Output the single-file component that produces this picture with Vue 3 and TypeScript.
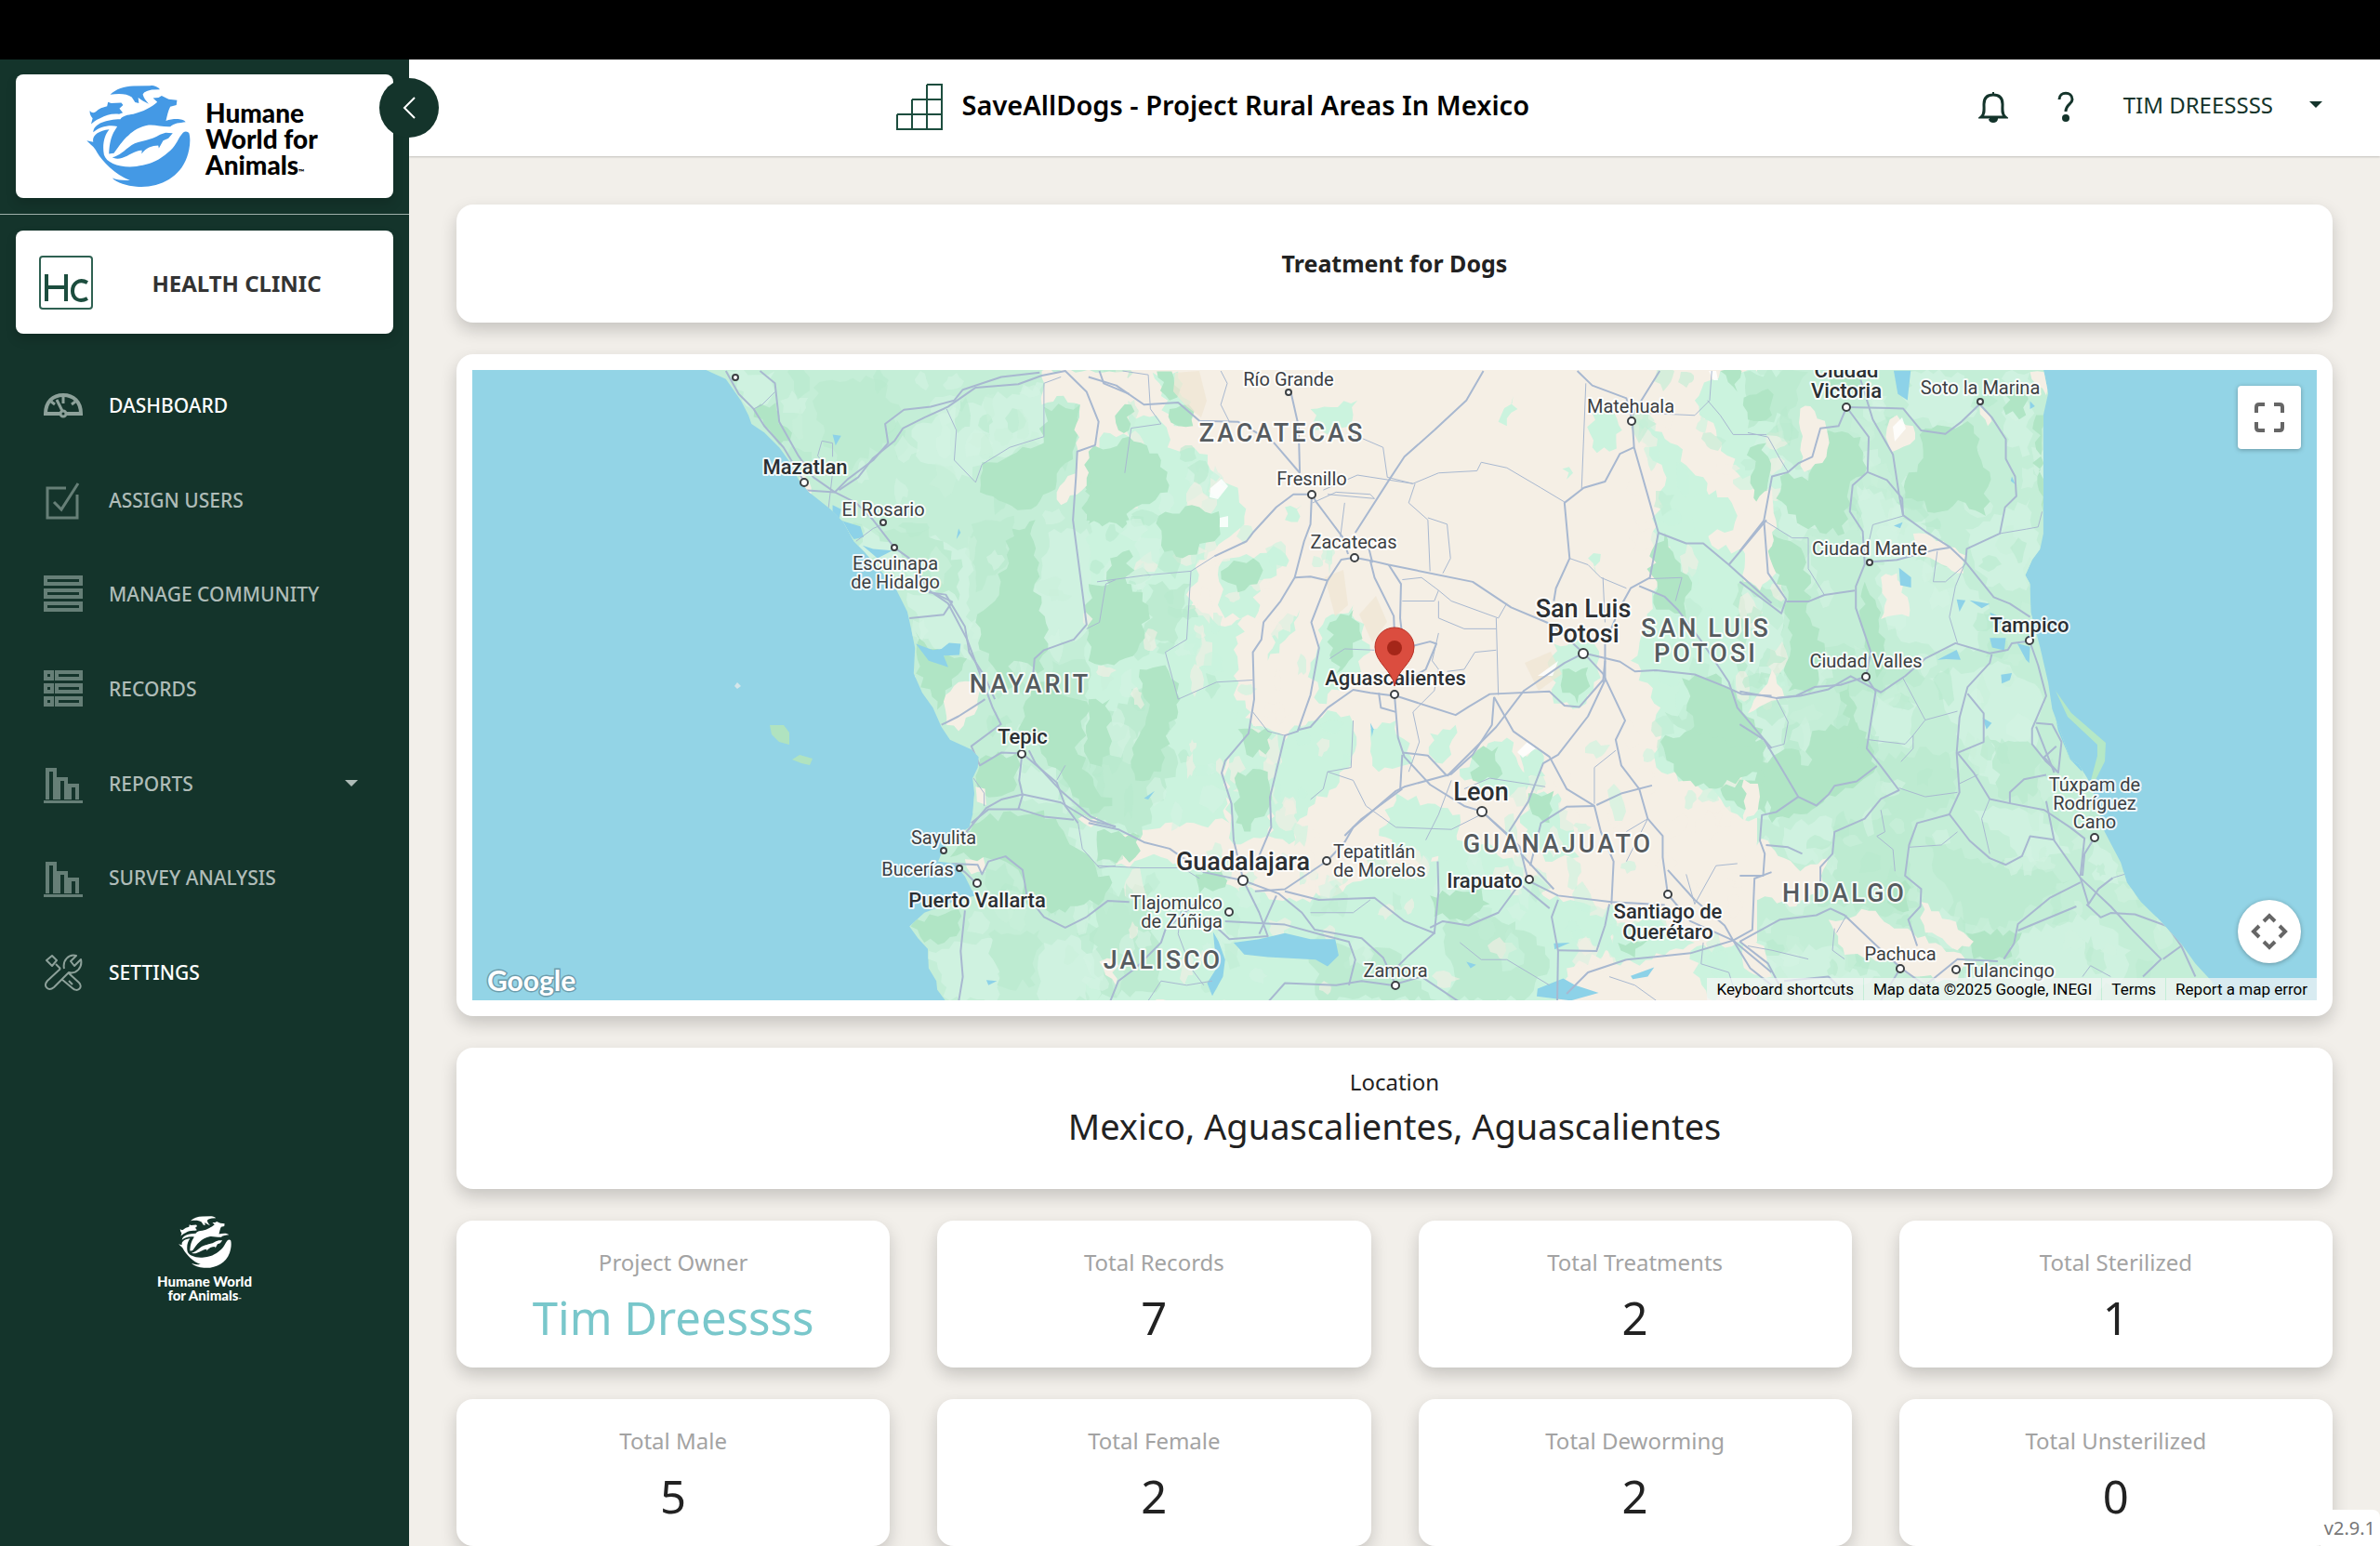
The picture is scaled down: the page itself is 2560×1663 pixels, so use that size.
<script setup lang="ts">
interface NavItem { label: string; icon: string; bright?: boolean; caret?: boolean }
interface Stat { label: string; value: string; link?: boolean }
interface Label { t: string[]; x: number; y: number; k: 's' | 'm' | 'l' | 'r'; a?: string; lh?: number }
interface Town { x: number; y: number; r: number }
interface Sheet { m: string; sand: string[]; light: string[]; mid: string[]; dark: string[]; lakes: string[]; roads: string[]; minor: string[] }

const nav: NavItem[] = [
  { label: 'DASHBOARD', icon: 'gauge', bright: true },
  { label: 'ASSIGN USERS', icon: 'check' },
  { label: 'MANAGE COMMUNITY', icon: 'rows' },
  { label: 'RECORDS', icon: 'list' },
  { label: 'REPORTS', icon: 'bars', caret: true },
  { label: 'SURVEY ANALYSIS', icon: 'bars' },
  { label: 'SETTINGS', icon: 'tools', bright: true },
]

const stats: Stat[] = [
  { label: 'Project Owner', value: 'Tim Dreessss', link: true },
  { label: 'Total Records', value: '7' },
  { label: 'Total Treatments', value: '2' },
  { label: 'Total Sterilized', value: '1' },
  { label: 'Total Male', value: '5' },
  { label: 'Total Female', value: '2' },
  { label: 'Total Deworming', value: '2' },
  { label: 'Total Unsterilized', value: '0' },
]

/* small seeded generator, so that the terrain is the same on every load */
let seed = 7
function rnd(): number {
  seed = (seed * 16807) % 2147483647
  return seed / 2147483647
}

/* breaks a coarse outline into an irregular one */
function rough(src: string, amp = 11): string {
  const p = src.split(' ').map(s => s.split(',').map(Number))
  const out: string[] = []
  p.forEach((a, i) => {
    const b = p[(i + 1) % p.length]
    const dx = b[0] - a[0]
    const dy = b[1] - a[1]
    const len = Math.hypot(dx, dy) || 1
    const n = Math.max(1, Math.round(len / 16))
    for (let k = 0; k < n; k++) {
      const j = k ? (rnd() - 0.5) * 2 * amp : 0
      out.push(`${Math.round(a[0] + (dx * k) / n - (dy / len) * j)},${Math.round(a[1] + (dy * k) / n + (dx / len) * j)}`)
    }
  })
  return out.join(' ')
}

function blob(cx: number, cy: number, rx: number, ry: number): string {
  const o: string[] = []
  for (let i = 0; i < 11; i++) {
    const a = (i / 11) * Math.PI * 2
    const q = 0.5 + rnd() * 0.7
    o.push(`${Math.round(cx + Math.cos(a) * rx * q)},${Math.round(cy + Math.sin(a) * ry * q)}`)
  }
  return o.join(' ')
}

const coastWest = '600,55 655,80 690,130 708,165 715,185 745,205 780,240 805,275 825,315 850,345 900,385 930,415 955,460 980,485 1010,520 1055,575 1080,625 1090,670 1098,710 1095,770 1115,815 1140,850 1160,895 1180,925 1230,948 1247,965 1245,990 1233,1015 1237,1050 1233,1100 1225,1130 1190,1150 1165,1180 1152,1210 1190,1215 1215,1245 1230,1275 1240,1290 1200,1300 1120,1330 1085,1362 1105,1390 1128,1415 1130,1460 1148,1490 1150,1510 1172,1540 1600,1540 1600,55'
const coastEast = '0,50 732,50 745,110 733,160 733,430 725,465 705,490 688,525 700,545 702,610 725,690 745,770 755,830 775,880 800,945 820,955 850,1000 870,1060 885,1110 925,1180 940,1225 975,1270 1020,1310 1075,1365 1110,1410 1150,1450 1175,1500 0,1500'

const sheets: Sheet[] = [
  {
    m: 'translate(480 370) scale(.4592)',
    sand: ['1395,61 1600,61 1600,215 1540,205 1530,250 1500,330 1440,375 1430,345 1478,285 1475,230 1485,140 1430,120 1395,140', '1165,835 1200,790 1250,790 1245,850 1200,905 1172,890', '1240,1035 1262,1040 1265,1078 1243,1070', '1215,1205 1258,1200 1262,1235 1230,1240', '820,290 850,320 855,350 825,330', '1555,330 1568,330 1568,345', '1480,1110 1525,1105 1510,1130', '1530,1445 1568,1440 1568,1500'],
    light: ['660,61 770,61 770,110 720,150', '1160,160 1400,90 1405,220 1290,260 1200,320 1100,260 1090,200', '850,420 930,415 1000,440 1100,440 1230,480 1220,700 1180,690 1140,580', '1410,440 1500,430 1550,560 1500,670 1400,720 1380,560', '1080,580 1200,600 1230,740 1110,690', '1340,1000 1450,980 1470,1080 1340,1060', '1460,1130 1568,1120 1568,1220 1500,1220', '1130,1420 1300,1380 1290,1536 1180,1536', '1400,1400 1560,1360 1500,1536 1390,1536', '1500,860 1568,840 1568,1000 1520,980'],
    mid: ['860,100 1000,80 1060,140 1040,230 930,290 880,220', '1000,430 1130,430 1210,520 1200,600 1090,530', '1230,420 1330,400 1310,520 1240,580', '1420,740 1530,740 1540,830 1440,830', '1270,1380 1390,1370 1380,1500 1290,1500'],
    dark: ['722,150 772,135 805,225 780,235 745,190', '1255,275 1400,230 1400,145 1485,140 1473,235 1430,320 1370,385 1310,370 1250,345', '1325,430 1380,410 1378,560 1410,700 1385,770 1330,740 1310,830 1270,740 1240,650 1285,600', '1500,290 1600,265 1600,410 1500,412', '1555,500 1600,480 1600,690 1545,680', '1098,670 1160,730 1220,735 1185,800 1150,855 1100,770', '1385,790 1500,835 1480,960 1560,1080 1510,1100 1440,1000 1340,900', '1250,970 1340,950 1330,1045 1270,1060 1240,1010', '1260,1110 1400,1090 1460,1170 1560,1260 1540,1300 1450,1330 1360,1310 1340,1230 1260,1200 1180,1200 1200,1150', '1088,1362 1200,1322 1195,1385 1120,1400'],
    lakes: ['905,375 925,385 920,410 905,395', '920,410 970,425 978,450 955,455', '1100,700 1140,715 1160,712 1178,698 1205,700 1202,726 1165,728 1176,755 1130,740', '975,470 1000,478 1045,482 1010,500', '905,210 925,213 912,236', '1265,1488 1290,1490 1270,1500', '1200,430 1205,440 1195,455'],
    roads: ['655,61 685,115 720,150 745,190 790,240 838,320', '735,61 770,90 780,180 825,260 860,310 910,345 960,370 1000,410 1050,475 1085,500 1130,575 1175,605 1220,690 1250,770 1280,850 1300,890', '838,340 910,345', '910,345 940,315 1000,270 1035,230 1028,185 1072,152 1135,145 1190,130 1210,105 1300,75 1390,65', '920,340 965,310 1000,265 1050,225 1070,195 1120,170 1175,145 1240,100 1340,92 1395,72 1450,61 1500,110 1528,180 1520,235 1478,250 1475,310 1468,410 1485,540 1500,655 1470,690 1400,715 1378,735 1375,770', '1085,640 1165,632 1185,602 1140,580', '1130,580 1170,585 1215,660 1225,720 1260,775 1285,830', '1160,890 1200,870 1255,835 1262,830', '1300,888 1230,940 1250,985 1300,955 1349,957 1365,970 1430,1025 1450,1080 1480,1120', '1365,950 1380,980 1440,1045 1510,1105 1568,1130', '1349,957 1342,1020 1350,1055 1340,1088', '1215,1145 1265,1085 1300,1065 1350,1053 1440,1072 1510,1115 1568,1128', '1230,1120 1270,1088 1345,1088 1400,1105 1470,1112', '1242,1262 1215,1235 1185,1215 1245,1218 1255,1240 1270,1210 1310,1198 1350,1230 1360,1290 1400,1340 1450,1365 1500,1340 1550,1302 1600,1305', '1215,1325 1205,1420 1210,1480 1200,1540', '1530,61 1540,90 1600,115'],
    minor: ['1172,150 1195,200 1190,270 1240,322 1255,280 1320,240 1400,215 1400,90 1440,75', '895,385 905,300 870,260 880,225 905,230 905,262', '960,460 1000,430 1024,420', '1500,665 1530,650 1545,560 1568,550', '1480,1120 1490,1180 1530,1225 1568,1220', '720,150 740,140 770,110', '1235,1015 1260,1050 1260,1080', '1430,1020 1450,985'],
  },
  {
    m: 'translate(1180 370) scale(.4592)',
    sand: [],
    light: [
      '-20,150 60,130 80,160 150,180 165,240 240,255 330,335 345,420 230,520 215,620 300,660 340,640 330,700 320,820 360,860 350,920 295,1000 310,1120 160,1120 90,1150 -20,1110',
      '285,520 350,490 430,480 450,505 380,560 370,640 300,640 290,590', '130,65 190,62 220,180 180,190 150,120', '500,150 610,130 600,200 510,200', '450,905 560,860 600,885 595,985 510,1075 450,1170 400,1150 430,960', '330,860 440,920 410,1060 400,1150 320,1170 300,1020',
      '-20,1230 150,1200 270,1240 420,1300 560,1290 640,1230 780,1210 870,1150 980,1220 1060,1300 1220,1320 1210,1420 1100,1460 1080,1545 -20,1545',
      '700,1050 850,1100 830,1200 760,1220 660,1150', '940,180 975,120 985,150 960,190', '1270,180 1330,220 1420,310 1455,400 1440,470 1568,490 1600,560 1600,1130 1500,1100 1450,1050 1310,990 1320,850 1250,740 1300,600 1330,540 1300,440 1330,330',
      '1160,160 1200,150 1230,200 1200,250 1160,240', '1460,61 1600,61 1600,330 1500,300 1450,200 1400,130', '1070,700 1160,690 1180,780 1130,850 1070,840 1060,760', '780,910 840,890 830,960 780,990', '990,960 1040,950 1050,1010 1000,1020', '880,960 960,920 1010,1010 1000,1080 900,1040 850,1010', '1000,1060 1080,1050 1130,1200 1050,1210 1000,1150', '1200,1370 1300,1330 1400,1400 1300,1440 1210,1450', '1390,1420 1568,1400 1568,1500 1430,1530', '535,640 600,610 640,720 580,800 520,840 500,760', '425,650 475,620 450,680 400,740', '1150,500 1180,490 1170,540', '440,380 480,375 470,415 440,410', '1090,290 1115,300 1100,315', '1380,360 1450,340 1500,400 1470,440 1400,440', '640,900 700,880 740,980 660,1000',
    ],
    mid: ['0,880 120,800 190,980 100,1160 -10,1100', '120,560 220,560 180,700 120,700', '-10,1300 120,1260 150,1500 0,1536', '500,1400 700,1420 800,1536 520,1536', '820,1350 980,1350 1060,1440 1000,1536 830,1536', '1500,560 1600,560 1600,800 1510,780', '1330,860 1420,850 1568,930 1568,1000 1440,970'],
    dark: [
      '-20,250 75,215 150,270 165,345 90,380 60,430 -20,420', '55,150 80,140 75,200 50,200', '145,400 240,380 285,390 275,460 200,500 150,470', '-20,560 80,560 120,610 100,700 40,750 -20,740', '100,760 160,750 195,830 170,900 150,1000 90,1020 90,930 120,860', '-20,830 30,830 30,960 -20,1000', '290,530 320,505 380,510 375,560 330,580', '545,650 600,620 615,670 600,730 560,770', '330,900 410,910 395,960 350,960', '330,1000 400,1000 410,1060 360,1140 325,1120', '780,1290 900,1270 920,1310 860,1350 790,1340', '890,950 940,940 950,1005 880,1020', '1090,760 1150,755 1155,800 1125,840 1090,815', '1320,930 1450,880 1568,940 1568,1000 1450,1040 1360,1010', '1300,480 1330,440 1385,540 1380,640 1310,620 1300,540', '1370,780 1450,770 1560,900 1540,960 1400,900', '1460,1040 1568,1000 1568,1100 1500,1080', '230,1240 290,1230 300,1270 240,1285', '0,1140 100,1150 90,1200 0,1210', '1460,61 1510,61 1500,110', '170,150 215,140 225,190 190,190', '1010,1050 1070,1045 1060,1120 1020,1100', '1220,1400 1290,1395 1260,1435', '1530,240 1568,230 1568,420 1540,340', '140,62 175,62 195,105 170,130',
    ],
    lakes: ['320,1400 380,1392 440,1378 500,1392 558,1392 566,1430 540,1456 512,1440 400,1434 345,1428', '272,1375 285,1398 300,1440 295,1480 270,1525 258,1495 280,1460', '1032,1508 1092,1484 1120,1500 1175,1518 1110,1536 1030,1526', '1070,1402 1108,1400 1072,1416', '1250,1478 1305,1458 1290,1480 1255,1486', '865,1445 888,1452 875,1460', '640,885 648,900 644,918', '110,1062 135,1045 120,1065'],
    roads: [
      '905,61 865,130 790,200 720,262 685,315 605,440', '-20,75 45,95 110,140 190,135 240,178 330,180 415,230 475,300', '455,115 472,190 475,300', '503,350 515,370 545,410 575,450 588,490', '503,350 460,350 420,380 365,440 350,460 275,495', '503,350 500,420 485,460 463,545 430,600 390,650 385,690 365,720 368,830 355,910 300,975 292,1003 315,1075 320,1160 343,1255', '463,545 500,543 540,552', '603,498 572,503 540,552 502,650 520,710 500,820 470,905 440,915 405,1060 408,1130 370,1220', '603,498 640,505 683,515 880,555 970,615 1065,655 1140,722', '640,505 650,545 695,635 697,680', '635,470 645,510', '683,515 712,560 710,640 716,690', '1254,180 1258,240 1315,440 1295,545 1250,570 1225,615 1190,700', '1258,240 1225,255 1190,320 1140,335 1095,370 1107,500 1075,570 1070,600', '1125,61 1160,95 1240,125 1254,180', '1318,61 1275,130 1254,165', '1315,440 1380,465 1420,465 1480,515 1580,605', '1480,515 1568,410', '1270,565 1330,590 1360,620 1420,700 1480,790 1500,850 1580,945',
      '1140,722 1185,770 1237,880 1215,925 1228,985 1270,1040 1290,1110 1325,1150 1325,1200 1337,1287', '1140,722 1095,745 1000,810 935,895 880,950 820,1010', '700,822 840,867 870,848 920,818 1060,812 1095,845 1130,848 1185,785', '930,825 975,905 1060,965 1100,1040 1165,1080 1180,1140 1210,1210 1205,1310', '930,825 925,890 880,960 830,1005 720,1035 700,1045 600,1130 580,1165 540,1208 440,1275 370,1280', '697,822 705,920 720,965 780,1030 860,1080 902,1093 990,1175 1010,1255 1080,1290 1205,1305 1330,1312', '902,1093 960,1145 1000,1200 1070,1275', '697,822 640,815 600,808 540,850 500,895 470,902', '715,955 775,962 820,1010', '715,960 710,1045', '715,1040 620,1110 580,1150', '-20,1120 50,1135 110,1165 170,1180 250,1235 343,1255', '343,1255 425,1285 480,1330 510,1370 620,1390 670,1435 700,1500', '343,1255 380,1330 400,1385 310,1392 270,1355', '440,1280 520,1300 650,1295 720,1350 790,1378 730,1430 700,1460', '300,1350 440,1358 520,1380 590,1398 605,1440 590,1500', '780,1365 810,1350 870,1360 940,1330 990,1262', '1080,1300 1065,1340 1080,1420 1078,1540', '1080,1418 1170,1420 1190,1360 1200,1310', '1337,1287 1390,1350 1490,1395 1580,1470', '1190,700 1190,785 1150,870 1080,960 1045,980 1010,1070 965,1140', '1170,1078 1230,1050 1300,1032', '1015,1220 1040,1120 1100,1082 1165,1080', '1140,722 1225,742 1260,765 1310,762 1400,772 1470,800 1510,818 1580,822', '1490,1395 1535,1370 1540,1250 1580,1235', '1337,1230 1400,1300 1470,1360 1490,1395', '30,1540 50,1490 90,1460 150,1400 160,1370 240,1300', '400,1540 440,1495 560,1500 620,1490 690,1500 760,1480 850,1540', '1100,1520 1150,1470 1240,1440 1390,1425 1490,1395', '740,705 780,695 795,700 770,760 720,790', '1190,740 1185,790', '1490,1395 1530,1460 1580,1500', '660,815 665,850 700,860', '420,1290 380,1380', '798,1210 800,1280 790,1380', '990,1262 1060,1320',
    ],
    minor: ['60,61 120,70 125,150 150,185 80,195 65,300', '290,61 305,90 290,140 310,180', '600,210 670,240 680,310 740,325', '505,370 560,345 640,350 650,360 540,350', '570,450 580,370', '530,340 610,305 740,325 800,300 890,295 900,275 960,288 1040,335 1095,368', '745,325 730,370 775,410 780,530', '775,405 820,420 828,500 810,535', '1145,90 1135,340', '1440,61 1435,130 1400,165 1290,160', '1430,130 1460,165 1490,210 1568,210', '0,555 110,540 220,530 275,495', '220,530 215,610 210,690 160,720 190,830 280,790 365,785', '365,860 400,905 440,915', '715,550 760,545 800,575 830,600 940,640 960,605', '715,600 790,600 800,575', '800,600 800,640 860,665 935,665', '935,640 940,820', '800,675 785,740 800,760 790,810 740,860 755,930 730,1000', '600,880 595,990 540,1000 530,1040 500,1065', '540,1000 600,1020 630,1080 700,1130 830,1135 900,1100', '545,735 580,712 650,715', '1107,500 1150,515 1180,545 1240,570', '1185,545 1190,650', '935,715 885,720 860,760 820,765', '830,1020 800,1100 770,1160', '860,1040 920,1015 1050,1035', '1165,1075 1165,990 1215,950', '0,1220 100,1225 200,1225 240,1250', '200,1300 190,1380 220,1460 250,1500', '640,1300 600,1330 500,1330', '1380,1240 1400,1310 1450,1220 1500,1215', '1420,1400 1415,1450 1480,1470 1500,1536', '1290,548 1370,545 1355,600', '1240,1140 1290,1110 1240,1210', '120,1536 150,1490 210,1500 270,1490', '850,1400 900,1440 960,1440 1060,1500', '1200,1480 1260,1500 1310,1536'],
  },
  {
    m: 'translate(1880 370) scale(.4337 .4719)',
    sand: ['130,145 155,140 195,190 195,255 140,290 130,240', '345,190 370,160 410,185 415,215 355,245', '-10,380 60,330 70,400 50,470 70,520 30,560 -10,540', '410,430 440,430 540,480 535,520 480,500 410,460', '330,530 370,520 400,590 400,620 330,625 345,580', '-10,1140 50,1130 90,1170 130,1200 200,1170 180,1240 120,1280 60,1260 -10,1270', '200,1310 300,1290 380,1330 480,1370 540,1400 520,1450 420,1440 350,1400 240,1390', '430,1270 500,1310 560,1360 520,1380 440,1340', '700,62 735,62 740,115 715,90', '-10,1340 40,1370 60,1440 -10,1420', '-10,990 25,1000 25,1060 -10,1090', '575,140 600,160 595,185', '0,840 60,740 90,800'],
    light: ['70,250 150,290 170,420 100,450 50,330', '400,62 520,62 570,150 500,200 390,150', '270,320 390,360 480,440 370,520 290,480', '320,500 520,500 600,600 560,700 400,680 340,620', '540,420 700,350 725,460 690,560 590,550', '450,760 620,720 730,800 700,960 600,1000 530,900', '0,840 100,820 100,900 60,950 0,900', '320,800 420,820 400,920 310,900', '560,1060 720,1060 800,1160 700,1180', '90,1100 210,1080 190,1180 100,1170', '680,1340 850,1300 950,1380 900,1494 640,1494', '640,62 700,62 700,250 640,230', '850,1130 900,1160 920,1230 860,1220', '-10,550 80,600 90,720 0,780', '40,1380 200,1370 330,1440 200,1494 50,1494'],
    mid: ['190,690 330,700 440,760 330,800 190,780', '320,940 520,920 520,1040 420,1080 330,1060', '210,1100 400,1060 400,1200 430,1280 330,1300 210,1270', '440,1120 600,1180 800,1220 640,1330 520,1320', '600,900 720,920 730,1040 620,1030', '-10,62 150,62 120,140 0,190'],
    dark: ['440,190 560,185 600,290 590,390 540,360 480,380 390,350 390,310 420,290', '160,280 200,195 280,210 295,280 250,330 240,430 150,420 70,350 80,300 150,310', '60,430 140,480 160,640 190,680 170,780 100,790 100,580 60,500', '290,540 330,610 340,700 320,760 280,640', '30,950 110,920 150,960 160,880 270,860 320,960 230,1020 130,1070 60,1090 30,1010', '250,770 290,900 270,930 230,810', '640,90 680,90 690,160 640,160', '340,1240 390,1220 400,1290 360,1280', '540,1340 680,1340 640,1400 560,1400', '-10,120 50,100 60,160 0,170', '715,160 733,160 733,380 718,300', '170,62 290,62 250,110'],
    lakes: ['362,59 404,59 396,126 372,112', '375,508 405,530 405,553 378,548', '600,668 640,668 636,696 606,690', '668,680 700,688 698,725 690,718', '470,718 518,695 528,718 492,716', '628,752 655,748 650,764 630,772', '582,850 605,862 592,876', '518,580 540,582 525,608', '550,582 600,590 580,600', '362,412 384,404 378,418', '755,810 790,845 840,888 874,930 855,962 835,952 828,972 800,945 770,880', '655,300 663,318 652,310', '700,128 712,140 700,146', '600,610 640,625 615,640'],
    roads: ['245,142 385,145 430,195 490,203 530,175 575,135 605,165 640,215 640,260 663,300 666,345 638,370 625,430 543,465 540,495', '280,80 310,170 360,250 375,340 385,388 440,425 500,460 540,495 610,575 650,590 700,620', '245,142 300,210 297,290 345,308 383,350 385,388', '297,290 260,320 253,380 285,425 290,500 268,550 268,600 305,700 293,756', '245,142 225,185 180,190 160,255 125,270 100,290 60,300 40,400 -20,470', '40,400 50,520 95,580 83,612 -20,540', '95,585 150,585 190,570 265,560', '303,495 370,490 460,468 500,462', '-20,790 70,805 120,800 165,780 230,775 293,756', '70,805 130,800 200,785 255,755 330,792 390,755 440,715 515,680 600,703 645,695 655,680 699,675', '605,705 600,725 545,780 525,850 518,930 525,1020 500,1070 420,1090 400,1140 390,1210 430,1240 428,1280 398,1310 420,1370', '293,756 317,790 295,920 330,960 375,1015 330,1035 290,1080 215,1110 210,1160 180,1190 180,1225', '-20,865 40,900 80,960 125,1030 170,1050 200,1025 215,1005 270,995 320,960', '125,1030 70,1065 35,1072 30,1130 42,1160 38,1210 -20,1210', '699,675 720,730 740,800 705,875 705,910 740,950 770,975', '715,862 755,865 778,905 770,975 735,940 765,915', '715,870 760,975', '545,795 585,840 585,905 520,930 560,975 600,1035 650,1045 735,1060 800,1100 835,1125 825,1210', '740,980 685,990 650,1020 650,1045', '740,1040 760,1130 825,1215 900,1280 950,1330 1025,1400 980,1440', '500,1070 550,1130 600,1170 640,1185 680,1165 700,1120 760,1128', '825,1225 750,1260 670,1320 660,1365 635,1400', '815,1280 670,1335', '825,1215 845,1275 870,1240 905,1215', '840,1275 875,1305 900,1295 960,1298 1040,1325 1075,1370 1030,1400', '1075,1370 1110,1440', '860,1123 835,1160 830,1210', '379,1420 320,1370 240,1300 205,1285 170,1300 80,1310 -20,1360', '379,1420 440,1460 520,1400 620,1405', '379,1420 330,1494', '-20,1360 50,1410 90,1480', '45,1140 100,1145 135,1160', '90,1450 200,1440 260,1494'],
    minor: ['0,200 50,210 80,260 100,290', '625,430 690,420 720,415 730,380', '385,390 310,410 300,450', '40,400 110,440 150,440 150,510 190,570', '540,495 515,550 500,620 520,680', '385,760 440,855 520,835', '440,855 410,890 390,910 300,900', '70,805 100,860 90,910 50,920', '375,1010 440,1030 520,1020', '330,1060 340,1110 320,1120 360,1150 365,1200', '400,1145 480,1140 520,1110', '525,1000 570,980', '600,1035 580,1080 600,1160', '905,1215 940,1205', '215,1330 210,1380 240,1400', '0,1370 60,1380 150,1400', '245,1300 220,1340', '470,470 460,540 490,540 540,500', '410,890 410,920 380,950', '830,1440 850,1415 900,1440'],
  },
]

const terrain = sheets.map(s => ({
  ...s,
  sand: s.sand.map(p => rough(p, 8)),
  light: s.light.map(p => rough(p, 12)),
  mid: s.mid.map(p => rough(p, 14)),
  dark: s.dark.map(p => rough(p, 12)),
}))

interface Fleck { p: string; c: string }
const flecks: Fleck[] = []
function scatter(n: number, x: number, y: number, w: number, h: number, colors: string[], s: number) {
  for (let i = 0; i < n; i++) {
    flecks.push({ p: blob(x + rnd() * w, y + rnd() * h, s * (0.5 + rnd()), s * (0.6 + rnd() * 1.3)), c: colors[i % colors.length] })
  }
}
scatter(150, 830, 398, 400, 677, ['#d3f3e3', '#b8e9cd', '#c9f0db'], 12)
scatter(60, 1180, 480, 130, 400, ['#d3f3e3', '#b8e9cd', '#f5efe5'], 12)
scatter(50, 1280, 560, 170, 420, ['#c9f4de', '#f5efe5'], 9)
scatter(60, 1180, 920, 480, 150, ['#d3f3e3', '#f5efe5', '#bfecd3'], 10)
scatter(60, 1760, 400, 160, 460, ['#c9f4de', '#f5efe5', '#bfecd3'], 11)
scatter(40, 1620, 780, 260, 290, ['#c9f4de', '#f5efe5'], 11)
scatter(130, 1880, 398, 320, 677, ['#d3f3e3', '#b8e9cd', '#c9f0db'], 12)
scatter(40, 2200, 800, 160, 275, ['#d0f2e0', '#bcebd0'], 10)

const labels: Label[] = [
  { t: ['Mazatlan'], x: 866, y: 509, k: 'm' },
  { t: ['El Rosario'], x: 950, y: 554, k: 's' },
  { t: ['Escuinapa', 'de Hidalgo'], x: 963, y: 612, k: 's' },
  { t: ['NAYARIT'], x: 1108, y: 744, k: 'r' },
  { t: ['Tepic'], x: 1100, y: 799, k: 'm' },
  { t: ['Sayulita'], x: 1015, y: 907, k: 's' },
  { t: ['Bucerías'], x: 987, y: 941, k: 's' },
  { t: ['Puerto Vallarta'], x: 1051, y: 975, k: 'm' },
  { t: ['JALISCO'], x: 1251, y: 1041, k: 'r' },
  { t: ['Río Grande'], x: 1386, y: 414, k: 's' },
  { t: ['ZACATECAS'], x: 1379, y: 474, k: 'r' },
  { t: ['Fresnillo'], x: 1411, y: 521, k: 's' },
  { t: ['Zacatecas'], x: 1456, y: 589, k: 's' },
  { t: ['Matehuala'], x: 1754, y: 443, k: 's' },
  { t: ['San Luis', 'Potosi'], x: 1703, y: 663, k: 'l', lh: 27 },
  { t: ['SAN LUIS', 'POTOSI'], x: 1835, y: 684, k: 'r', lh: 27 },
  { t: ['Aguascalientes'], x: 1501, y: 736, k: 'm' },
  { t: ['Leon'], x: 1593, y: 860, k: 'l' },
  { t: ['GUANAJUATO'], x: 1676, y: 916, k: 'r' },
  { t: ['Guadalajara'], x: 1337, y: 935, k: 'l' },
  { t: ['Tepatitlán', 'de Morelos'], x: 1434, y: 922, k: 's', a: 'start' },
  { t: ['Irapuato'], x: 1597, y: 954, k: 'm' },
  { t: ['Tlajomulco', 'de Zúñiga'], x: 1315, y: 977, k: 's', a: 'end' },
  { t: ['Santiago de', 'Querétaro'], x: 1794, y: 987, k: 'm', lh: 22 },
  { t: ['Zamora'], x: 1501, y: 1050, k: 's' },
  { t: ['Ciudad', 'Victoria'], x: 1986, y: 405, k: 'm', lh: 22 },
  { t: ['Soto la Marina'], x: 2130, y: 423, k: 's' },
  { t: ['Ciudad Mante'], x: 2011, y: 596, k: 's' },
  { t: ['Tampico'], x: 2183, y: 679, k: 'm' },
  { t: ['Ciudad Valles'], x: 2007, y: 717, k: 's' },
  { t: ['Túxpam de', 'Rodríguez', 'Cano'], x: 2253, y: 850, k: 's' },
  { t: ['HIDALGO'], x: 1984, y: 969, k: 'r' },
  { t: ['Pachuca'], x: 2044, y: 1032, k: 's' },
  { t: ['Tulancingo'], x: 2112, y: 1050, k: 's', a: 'start' },
]

const towns: Town[] = [
  [865, 518, 4], [950, 561, 3], [962, 588, 3], [1099, 810, 4], [1015, 914, 3], [1032, 933, 3], [1051, 949, 4], [791, 405, 3],
  [1386, 421, 3], [1411, 531, 4], [1457, 599, 4], [1755, 452, 4], [1703, 702, 5], [1500, 746, 4], [1594, 872, 5], [1337, 946, 5],
  [1427, 925, 4], [1645, 945, 4], [1322, 980, 4], [1794, 961, 4], [1501, 1059, 4], [1986, 437, 4], [2130, 431, 3], [2011, 604, 3],
  [2183, 688, 4], [2007, 727, 4], [2253, 900, 4], [2044, 1041, 4], [2104, 1042, 4],
].map(([x, y, r]) => ({ x, y, r }))
</script>

<template>
  <div class="page">
    <svg class="defs" aria-hidden="true">
      <symbol id="globe" viewBox="278 122 338 332">
        <path d="M355 153C372 136 402 125 430 125L485 124C498 123 512 130 516 136L490 137C474 140 462 146 461 153C464 164 470 172 480 183C466 177 455 170 446 163L448 181L436 178L425 161C410 150 385 148 355 153Z" />
        <path d="M289 205C294 212 300 214 308 209C318 199 332 194 345 191L348 177L358 181L391 179L397 187L385 198L396 212L384 216C360 214 342 218 322 230C308 236 298 244 293 249L298 230C291 222 288 214 289 205Z" />
        <path d="M300 275C302 246 345 234 388 233C394 222 412 218 430 216C462 208 490 194 508 177L494 164L512 163L522 157L545 168L572 171L570 187L550 192C543 205 540 222 536 238C560 230 592 230 600 242C580 245 562 245 550 257C530 259 500 250 480 252C450 258 430 270 415 285C395 300 378 330 367 343L351 345C352 325 354 300 366 276L378 256C350 250 320 258 300 275Z" />
        <path d="M279 302L300 307C295 287 315 270 352 266C335 285 329 318 335 348C343 376 390 392 440 386C500 378 520 360 550 335C572 314 574 296 592 276C600 270 607 273 611 278C618 300 612 335 604 357C580 425 510 458 440 452C410 449 376 440 362 424C380 431 400 432 419 431C370 413 330 370 312 340C303 320 290 315 279 302Z" />
        <path d="M362 357C385 352 400 335 425 317C450 302 490 302 517 283L535 277L558 278L544 295L527 302L513 327L511 318C490 319 472 325 457 345L458 334C438 333 415 352 395 358C382 363 370 362 362 357Z" />
      </symbol>
    </svg>

    <div class="topbar"></div>
    <div class="shell">
      <aside class="sidebar">
        <div class="brand-wrap">
          <div class="brand">
            <svg class="brand-globe" fill="#4499e5" aria-hidden="true"><use href="#globe" /></svg>
            <div class="brand-name">Humane<br>World for<br>Animals<small>™</small></div>
          </div>
        </div>
        <div class="clinic">
          <svg class="hc" viewBox="0 0 58 58" aria-hidden="true">
            <rect x="1" y="1" width="56" height="56" rx="3" fill="none" stroke="#2f6152" stroke-width="2" />
            <path d="M8 20V49M29 20V49M8 34H29M52 29C43 24 36 30 36 38C36 46 43 51 52 46" fill="none" stroke="#1c4d3e" stroke-width="4" />
          </svg>
          <span>HEALTH CLINIC</span>
        </div>
        <nav class="nav">
          <a v-for="n in nav" :key="n.label" href="#" class="nav-item" :class="{ bright: n.bright }">
            <svg class="nav-icon" viewBox="0 0 42 42" fill="none" stroke="currentColor" stroke-width="3" aria-hidden="true">
              <template v-if="n.icon === 'gauge'">
                <path stroke-width="4" d="M18 30H2C2 17 10 10 21 10S40 17 40 30H24" />
                <path d="M21 10V19M14 15L20 27M8 17L12 20M34 17L30 20" />
                <circle cx="21" cy="30" r="3" />
              </template>
              <path v-else-if="n.icon === 'check'" d="M24 8H4V40H36V15M11 23L19 31L37 3" />
              <path v-else-if="n.icon === 'rows'" stroke-width="4" d="M2 3H40V10H2ZM2 17H40V24H2ZM2 31H40V38H2Z" />
              <path v-else-if="n.icon === 'list'" stroke-width="4" d="M2 3H9V10H2ZM2 17H9V24H2ZM2 31H9V38H2ZM14 3H40V10H14ZM14 17H40V24H14ZM14 31H40V38H14Z" />
              <path v-else-if="n.icon === 'bars'" stroke-width="4" d="M0 41H42M4 38V6H12V38M16 38V16H24V38M28 38V23H36V38" />
              <path v-else stroke-width="2" stroke-linejoin="round" d="M3 8L9 3L14 8L9 14ZM13 12L18 17M22 17C20 8 27 1 35 3L29 9L33 14L40 7C42 16 35 23 27 21L11 37C5 42 -1 36 4 30L18 17M26 21L38 32C43 37 36 43 31 38L19 28M27 30L31 34" />
            </svg>
            <span>{{ n.label }}</span>
            <i v-if="n.caret" class="caret"></i>
          </a>
        </nav>
        <div class="side-foot">
          <svg class="foot-globe" fill="#fff" aria-hidden="true"><use href="#globe" /></svg>
          <div>Humane World<br>for Animals<small>™</small></div>
        </div>
        <button class="collapse" type="button" aria-label="Collapse menu">
          <svg viewBox="0 0 14 24" width="14" height="24" fill="none" stroke="#fff" stroke-width="2"><path d="M13 1L2 12L13 23" /></svg>
        </button>
      </aside>

      <div class="content">
        <header class="header">
          <div class="title">
            <svg width="50" height="50" viewBox="0 0 50 50" fill="none" stroke="#1c4d3e" stroke-width="2" aria-hidden="true">
              <path d="M1 33H49M17 17H49M33 1H49V49H1V33M33 1V49M17 17V49" />
            </svg>
            <h1>SaveAllDogs - Project Rural Areas In Mexico</h1>
          </div>
          <div class="actions">
            <button type="button" aria-label="Notifications">
              <svg width="32" height="34" viewBox="0 0 32 34" fill="none" stroke="#14342b" stroke-width="3"><path d="M3 28H29C25 25 26 20 26 14C26 7 22 4 16 4S6 7 6 14C6 20 7 25 3 28Z" /><path d="M12 30H20A4 3 0 0 1 12 30M16 1V4" fill="#14342b" stroke-width="2" /></svg>
            </button>
            <button type="button" aria-label="Help">
              <svg width="18" height="34" viewBox="0 0 18 34" fill="none" stroke="#14342b" stroke-width="3"><path d="M2 9C2 0 16 0 16 9C16 14 9 14 9 22" /><circle cx="9" cy="29" r="4" fill="#14342b" stroke="none" /></svg>
            </button>
            <button type="button" class="user"><span>TIM DREESSSS</span><i class="caret"></i></button>
          </div>
        </header>

        <main class="main">
          <section class="card treatment"><h2>Treatment for Dogs</h2></section>

          <section class="card map-card">
            <div class="map">
              <svg class="map-art" viewBox="508 397 1984 678" preserveAspectRatio="xMidYMid slice" role="img" aria-label="Map of central Mexico">
                <defs>
                  <clipPath id="land">
                    <polygon :points="coastWest" :transform="sheets[0].m" />
                    <rect x="1190" y="390" width="700" height="700" />
                    <polygon :points="coastEast" :transform="sheets[2].m" />
                  </clipPath>
                </defs>
                <rect x="0" y="0" width="3000" height="2000" fill="#93d4e6" />
                <g fill="#b0e3c0">
                  <path d="M828 779L843 779L849 787L849 800L838 797L830 789ZM852 816L860 811L874 815L871 822L862 820Z" />
                  <path d="M793 733L797 737L793 740L790 737Z" fill="#d5e6ea" />
                </g>
                <g clip-path="url(#land)">
                  <rect x="700" y="380" width="1800" height="700" fill="#c4eed7" />
                  <rect x="1200" y="380" width="690" height="700" fill="#f5efe5" />
                  <g v-for="(s, i) in terrain" :key="i" :transform="s.m">
                    <polygon v-for="(p, j) in s.light" :key="'l' + j" :points="p" :fill="i === 1 ? '#cbf3de' : '#cff2e0'" />
                    <polygon v-for="(p, j) in s.mid" :key="'m' + j" :points="p" fill="#bdebd1" />
                  </g>
                  <polygon v-for="(f, i) in flecks" :key="'f' + i" :points="f.p" :fill="f.c" opacity=".6" />
                  <g v-for="(s, i) in terrain" :key="'t' + i" :transform="s.m">
                    <polygon v-for="(p, j) in s.dark" :key="'d' + j" :points="p" fill="#b0e5c5" />
                    <polygon v-for="(p, j) in s.sand" :key="'s' + j" :points="p" fill="#f5efe5" />
                  </g>
                  <g fill="#f0e5d3" opacity=".7">
                    <path d="M1264 400L1290 398L1298 430L1292 448L1276 436L1262 420ZM1425 620L1445 612L1450 650L1436 662ZM1462 660L1480 640L1492 668L1476 690ZM1640 712L1668 700L1680 724L1655 742Z" />
                  </g>
                  <path fill="#fff" d="M1302 524L1314 514L1321 522L1310 536L1301 534ZM1312 556L1321 554L1321 566L1312 566ZM1846 398L1848 408L1843 408L1838 398ZM2036 458L2046 448L2050 460L2038 474ZM1632 808L1644 796L1652 804L1638 814ZM1654 726L1676 710L1670 726Z" opacity=".85" />
                  <g v-for="(s, i) in terrain" :key="'r' + i" :transform="s.m" fill="none">
                    <polygon v-for="(p, j) in s.lakes" :key="'k' + j" :points="p" fill="#8dd2e8" />
                    <polyline v-for="(p, j) in s.minor" :key="'n' + j" :points="p" class="minor" />
                    <polyline v-for="(p, j) in s.roads" :key="'o' + j" :points="p" class="road" />
                  </g>
                </g>
                <path fill="#b5e8c6" d="M2211 742L2228 766L2265 798L2264 818L2254 838L2248 842L2256 812L2256 800L2224 770Z" />
                <g fill="#fff" stroke="#3c4043">
                  <circle v-for="(c, i) in towns" :key="'c' + i" :cx="c.x" :cy="c.y" :r="c.r" stroke-width="2" />
                </g>
                <g v-for="(l, i) in labels" :key="'x' + i" :class="['lbl', l.k]" :text-anchor="l.a || 'middle'">
                  <text v-for="(t, j) in l.t" :key="j" :x="l.x" :y="l.y + j * (l.lh || 20)">{{ t }}</text>
                </g>
                <g>
                  <path d="M1500 737C1498 720 1479 712 1479 695A21 21 0 0 1 1521 695C1521 712 1502 720 1500 737Z" fill="#db4d3f" stroke="#b93227" stroke-width="1" />
                  <circle cx="1500" cy="696" r="8" fill="#a52619" />
                </g>
              </svg>
              <span class="google">Google</span>
              <button class="ctl full" type="button" aria-label="Toggle fullscreen view">
                <svg width="32" height="32" viewBox="0 0 32 32" fill="none" stroke="#666" stroke-width="4"><path d="M2 11V5Q2 2 5 2H11M21 2H27Q30 2 30 5V11M30 21V27Q30 30 27 30H21M11 30H5Q2 30 2 27V21" /></svg>
              </button>
              <button class="ctl pan" type="button" aria-label="Map camera controls">
                <svg width="40" height="40" viewBox="0 0 40 40" fill="none" stroke="#666" stroke-width="4"><path d="M14 9L20 3L26 9M14 31L20 37L26 31M9 14L3 20L9 26M31 14L37 20L31 26" /></svg>
              </button>
              <div class="credits">
                <button type="button">Keyboard shortcuts</button>
                <span>Map data ©2025 Google, INEGI</span>
                <a href="#">Terms</a>
                <a href="#">Report a map error</a>
              </div>
            </div>
          </section>

          <section class="card location">
            <span>Location</span>
            <strong>Mexico, Aguascalientes, Aguascalientes</strong>
          </section>

          <section class="stats">
            <article v-for="s in stats" :key="s.label" class="card stat">
              <span>{{ s.label }}</span>
              <a v-if="s.link" href="#">{{ s.value }}</a>
              <strong v-else>{{ s.value }}</strong>
            </article>
          </section>
        </main>
      </div>
    </div>
    <div class="version">v2.9.1</div>
  </div>
</template>

<style>
body { background: #f2efea; }
</style>

<style scoped>
* { box-sizing: border-box; }
.page {
  min-height: 100vh;
  display: flex;
  flex-direction: column;
  font-family: "Noto Sans", "Open Sans", sans-serif;
  font-size: 24px;
  color: #222;
}
.defs { position: absolute; width: 0; height: 0; }
button { border: 0; padding: 0; background: none; font: inherit; color: inherit; }
a { text-decoration: none; color: inherit; }
.topbar { height: 64px; background: #000; }
.shell { flex: 1; display: flex; }

.sidebar { position: relative; flex: 0 0 440px; background: #14342b; }
.brand-wrap { padding: 16px 17px 17px; border-bottom: 1px solid #9fb0aa; }
.brand, .clinic { display: flex; align-items: center; background: #fff; border-radius: 8px; box-shadow: 0 6px 12px rgba(0, 0, 0, .15); }
.brand { height: 133px; padding-left: 76px; }
.brand-globe { width: 112px; height: 111px; flex: none; }
.brand-name { margin: 4px 0 0 16px; font: 900 28px/28px Lato, sans-serif; color: #000; }
.brand-name small { font-size: 8px; line-height: 8px; }
.clinic { height: 111px; margin: 17px 17px 0; padding: 0 25px; color: #333; font-weight: 700; }
.clinic span { flex: 1; text-align: center; padding-top: 2px; margin-right: 26px; margin-left: 37px; }
.hc { width: 58px; height: 58px; flex: none; }
.nav { display: grid; grid-auto-rows: 1fr; height: 712px; margin-top: 26px; }
.nav-item { display: flex; align-items: center; padding: 0 55px 0 47px; color: #afbcb8; font-size: 21px; font-weight: 500; }
.nav-item span { flex: 1; }
.nav-item.bright { color: #fff; }
.nav-icon { width: 42px; height: 42px; margin-right: 28px; color: #667f77; flex: none; }
.bright .nav-icon { color: #8da19a; }
.caret { border: 7px solid transparent; border-top-color: currentColor; border-bottom: 0; }
.side-foot { display: flex; flex-direction: column; align-items: center; margin-top: 211px; color: #fff; text-align: center; font: 900 15px/15px Lato, sans-serif; }
.side-foot small { font-size: 4px; line-height: 4px; }
.foot-globe { width: 57px; height: 56px; margin-bottom: 7px; }
.collapse { position: absolute; top: 20px; right: -32px; width: 64px; height: 64px; border-radius: 50%; background: #14342b; display: grid; place-items: center; z-index: 2; }

.content { flex: 1; min-width: 0; background: #f2efea; }
.header { display: flex; align-items: center; height: 104px; padding-bottom: 3px; background: #fff; box-shadow: 0 1px 2px rgba(0, 0, 0, .2); }
.title { flex: 1; display: flex; align-items: center; justify-content: center; gap: 21px; padding-left: 41px; }
.title h1 { margin: 0 0 4px; font-size: 29px; line-height: 40px; font-weight: 600; color: #000; }
.actions { display: flex; align-items: center; gap: 53px; padding-right: 62px; color: #14342b; }
.actions svg { display: block; }
.user { display: flex; align-items: center; gap: 39px; line-height: 34px; padding-bottom: 4px; }

.main { display: flex; flex-direction: column; gap: 34px; padding: 52px 51px 0; }
.card { background: #fff; border-radius: 18px; box-shadow: 0 8px 18px rgba(0, 0, 0, .18); }
.treatment { height: 127px; display: grid; place-items: center; }
.treatment h2 { margin: 0 0 2px; font-size: 25px; line-height: 34px; font-weight: 700; }
.map-card { padding: 17px; }
.map { position: relative; height: 678px; overflow: hidden; font-family: Roboto, sans-serif; }
.map-art { display: block; width: 100%; height: 100%; }
.road, .minor { stroke: #a8b8d0; vector-effect: non-scaling-stroke; stroke-linejoin: round; }
.road { stroke-width: 2px; }
.minor { stroke-width: 1px; }
.lbl { fill: #3c4043; font-size: 20px; paint-order: stroke; stroke: rgba(255, 255, 255, .85); stroke-width: 4px; stroke-linejoin: round; }
.lbl.m { font-size: 22px; font-weight: 500; fill: #2b2f33; }
.lbl.l { font-size: 27px; font-weight: 500; fill: #2b2f33; }
.lbl.r { font-size: 27px; font-weight: 500; fill: #565b5f; letter-spacing: 3px; }
.google { position: absolute; left: 16px; bottom: 5px; font: 700 30px/34px Lato, sans-serif; color: #fff; paint-order: stroke; -webkit-text-stroke: 3px #6d9dad; }
.ctl { position: absolute; right: 17px; width: 68px; height: 68px; display: grid; place-items: center; background: #fff; box-shadow: 0 1px 5px rgba(0, 0, 0, .3); }
.full { top: 17px; border-radius: 4px; }
.pan { bottom: 40px; border-radius: 50%; }
.credits { position: absolute; right: 0; bottom: 0; display: flex; gap: 1px; font-size: 17px; line-height: 24px; color: #000; }
.credits > * { padding: 0 10px; background: rgba(245, 245, 245, .7); line-height: 24px; }

.location { height: 152px; display: flex; flex-direction: column; align-items: center; padding-top: 20px; line-height: 34px; }
.location strong { font-size: 38px; line-height: 60px; font-weight: 400; }
.stats { display: grid; grid-template-columns: repeat(4, 1fr); gap: 34px 51px; }
.stat { height: 158px; display: flex; flex-direction: column; align-items: center; padding-top: 28px; line-height: 34px; }
.stat span { color: #a3a3a3; }
.stat strong, .stat a { font-size: 49px; line-height: 84px; font-weight: 400; }
.stat a { color: #79c7cb; }
.version { position: fixed; right: 0; bottom: 0; padding: 0 5px 0 4px; border-radius: 8px 8px 0 0; background: #fff; color: #777; font-size: 20px; line-height: 39px; }
</style>
